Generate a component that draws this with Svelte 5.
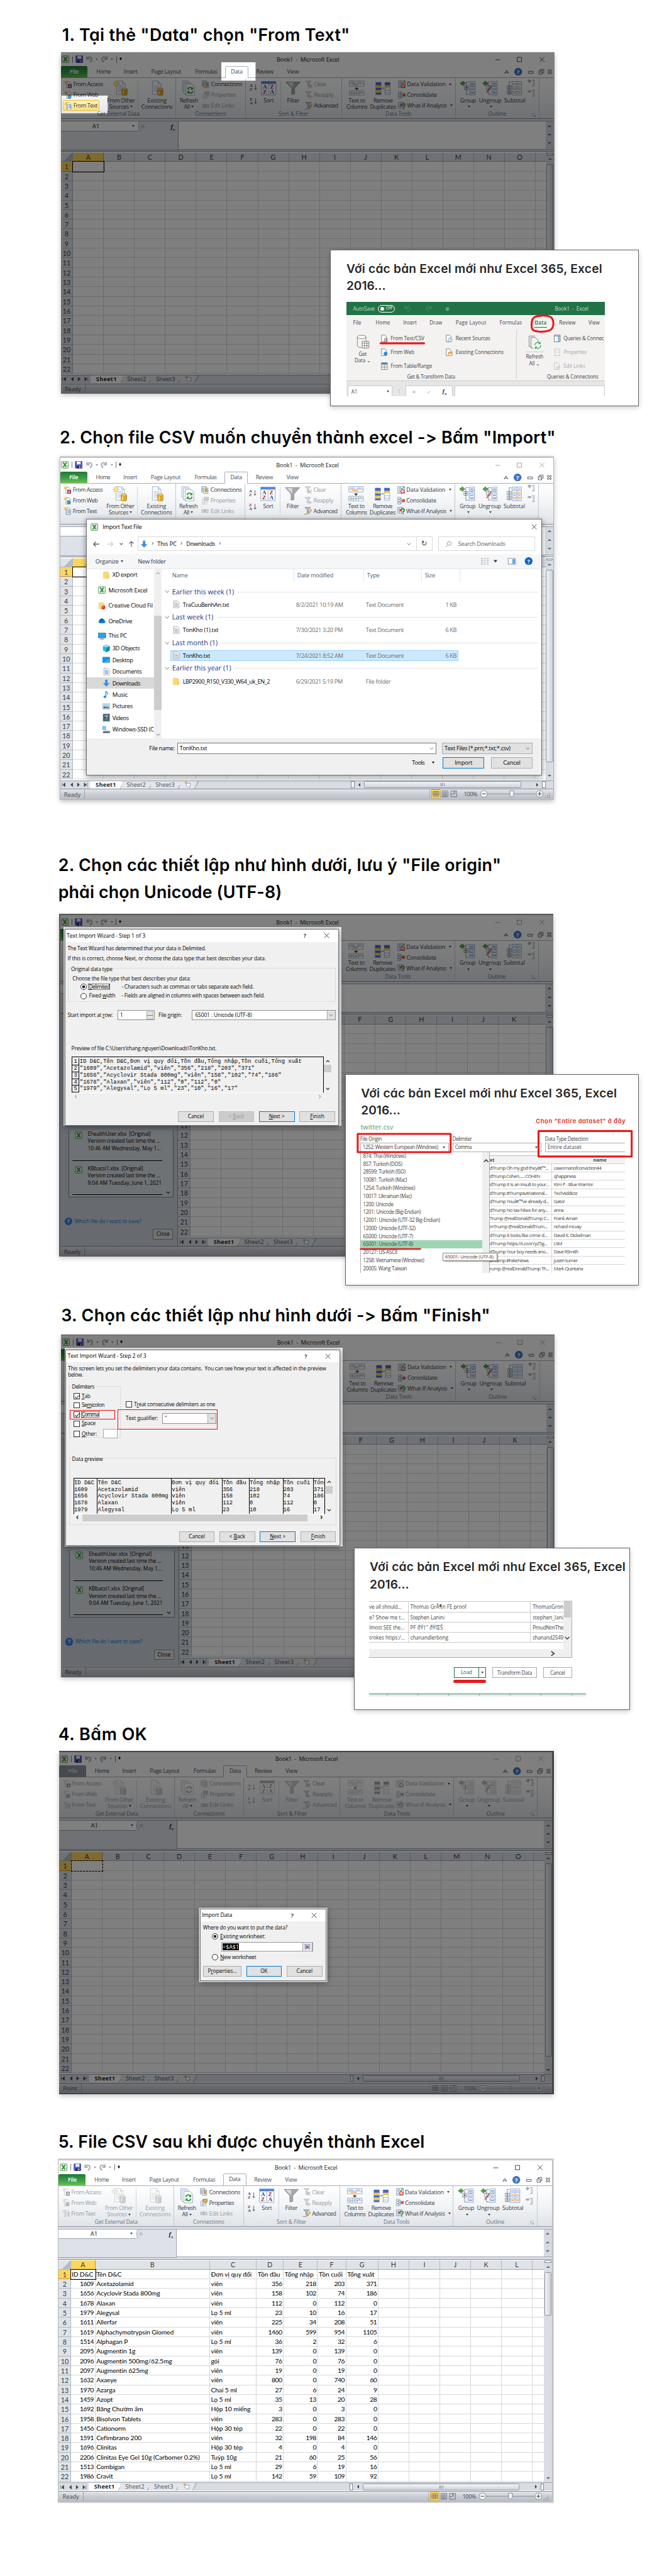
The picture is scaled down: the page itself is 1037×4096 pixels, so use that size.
<script>
  const letters = 'ABCDEFGHIJKLMNOPQ'.split('');
  const rowNumbers = Array.from({ length: 22 }, (_, i) => i + 1);
  const plainCols = Array(15).fill(64);
  const paneCols = Array(11).fill(64);
  const dataCols = [50, 238, 97, 56, 71, 59, 67, 64, 64, 64, 64, 64];

  // Widths of the ribbon captions, in pixels.
  const caption = {
    File: 18, Home: 30, Insert: 29, 'Page Layout': 62, Formulas: 46, Data: 24, Review: 36, View: 25,
    Group: 33, Ungroup: 47, Subtotal: 44, 'From Other': 58, Sources: 41, Existing: 40, Connections: 65,
    Refresh: 38, All: 12, Sort: 21, Filter: 26, 'Text to': 34, Columns: 44, Remove: 40, Duplicates: 54,
    'Get External Data': 89, 'Sort & Filter': 62, 'Data Tools': 54, Outline: 38
  };

  const stock = [
    ['ID D&C', 'Tên D&C', 'Đơn vị quy đổi', 'Tồn đầu', 'Tổng nhập', 'Tồn cuối', 'Tổng xuất'],
    [1609, 'Acetazolamid', 'viên', 356, 218, 203, 371],
    [1656, 'Acyclovir Stada 800mg', 'viên', 158, 102, 74, 186],
    [1678, 'Alaxan', 'viên', 112, 0, 112, 0],
    [1979, 'Alegysal', 'Lọ 5 ml', 23, 10, 16, 17],
    [1611, 'Allerfar', 'viên', 225, 34, 208, 51],
    [1619, 'Alphachymotrypsin Glomed', 'viên', 1460, 599, 954, 1105],
    [1514, 'Alphagan P', 'Lọ 5 ml', 36, 2, 32, 6],
    [2095, 'Augmentin 1g', 'viên', 139, 0, 139, 0],
    [2096, 'Augmentin 500mg/62.5mg', 'gói', 76, 0, 76, 0],
    [2097, 'Augmentin 625mg', 'viên', 19, 0, 19, 0],
    [1632, 'Axaeye', 'viên', 800, 0, 740, 60],
    [1970, 'Azarga', 'Chai 5 ml', 27, 6, 24, 9],
    [1459, 'Azopt', 'Lọ 5 ml', 35, 13, 20, 28],
    [1692, 'Băng Chườm ấm', 'Hộp 10 miếng', 3, 0, 3, 0],
    [1958, 'Bisolvon Tablets', 'viên', 283, 0, 283, 0],
    [1456, 'Cationorm', 'Hộp 30 tép', 22, 0, 22, 0],
    [1591, 'Cefimbrano 200', 'viên', 32, 198, 84, 146],
    [1696, 'Clinitas', 'Hộp 30 tép', 4, 0, 4, 0],
    [2206, 'Clinitas Eye Gel 10g (Carbomer 0.2%)', 'Tuýp 10g', 21, 60, 25, 56],
    [1513, 'Combigan', 'Lọ 5 ml', 29, 6, 19, 16],
    [1986, 'Cravit', 'Lọ 5 ml', 142, 59, 109, 92]
  ];

  const preview = [
    'ID D&C,Tên D&C,Đơn vị quy đổi,Tồn đầu,Tổng nhập,Tồn cuối,Tổng xuất',
    '"1609","Acetazolamid","viên","356","218","203","371"',
    '"1656","Acyclovir Stada 800mg","viên","158","102","74","186"',
    '"1678","Alaxan","viên","112","0","112","0"',
    '"1979","Alegysal","Lọ 5 ml","23","10","16","17"'
  ];
  const previewWidths = [49, 154, 105.5, 56, 70, 63, 24.5];

  const encodings = [
    ['874: Thai (Windows)', 89], ['857: Turkish (DOS)', 81], ['28599: Turkish (ISO)', 88], ['10081: Turkish (Mac)', 91],
    ['1254: Turkish (Windows)', 108], ['10017: Ukrainian (Mac)', 101], ['1200: Unicode', 63], ['1201: Unicode (Big-Endian)', 120],
    ['12001: Unicode (UTF-32 Big-Endian)', 160], ['12000: Unicode (UTF-32)', 109], ['65000: Unicode (UTF-7)', 104],
    ['65001: Unicode (UTF-8)', 104], ['20127: US-ASCII', 71], ['1258: Vietnamese (Windows)', 127], ['20005: Wang Taiwan', 91]
  ];
  const tweets = [
    ['dTrump Oh my god theyâ€™...', 122, 'cawomanofconviction44', 99],
    ['dTrump Cohen...... COHEN', 105, 'qhappiness', 46],
    ['dTrump It is an insult to your...', 124, 'Kim P - Blue Warrior', 82],
    ['dTrump #TrumpIsANational...', 120, 'TechAddictz', 49],
    ['dTrump Youâ€™ve already d...', 123, 'Gator', 23],
    ['dTrump No tax hikes for any...', 122, 'anna', 20],
    ['Trump @realDonaldTrump C...', 124, 'Frank Amari', 49],
    ['mTrump @realDonaldTrum...', 120, 'richard mcvay', 57],
    ['dTrump It looks like crime d...', 120, 'David E. Dickelman', 77],
    ['dTrump https://t.co/xYyZ5g...', 120, 'LSM', 17],
    ['dTrump Your boy needs ano...', 122, 'Dave RSmith', 51],
    ['dTrump #FakeNews', 81, 'justin turner', 50],
    ['rump @realDonaldTrump Th...', 124, 'Mark Quintana', 61]
  ];
  const loadRows = [
    ['ve all should...', 67, 'Thomas GrÃ¶n FE proof', 117, 'ThomasGron'],
    ['e? Show me t...', 74, 'Stephen Lanini', 71, 'stephen_lani'],
    ['lmost SEE the...', 73, 'PF ðŸ†˜ ðŸŒŠ', 68, 'ProudNonThe'],
    ['trokes https:/...', 74, 'chanandlerbong', 79, 'chanand2549']
  ];
  const roots = [
    ['folder', 'XD export', 1, 52], ['excel', 'Microsoft Excel', 0, 81], ['cloud', 'Creative Cloud Fil', 0, 92],
    ['onedrive', 'OneDrive', 0, 49], ['pc', 'This PC', 0, 38]
  ];
  const places = [
    ['cube', '3D Objects', 57], ['desktop', 'Desktop', 43], ['doc', 'Documents', 61], ['down', 'Downloads', 58],
    ['music', 'Music', 32], ['picture', 'Pictures', 42], ['video', 'Videos', 34], ['drive', 'Windows-SSD (C', 86]
  ];
  const fileGroups = [
    ['Earlier this week (1)', 129, 'file', 'TraCuuBenhAn.txt', 96, '8/2/2021 10:19 AM', 98, 'Text Document', 79, '1 KB'],
    ['Last week (1)', 86, 'file', 'TonKho (1).txt', 74, '7/30/2021 3:20 PM', 97, 'Text Document', 79, '6 KB'],
    ['Last month (1)', 95, 'file', 'TonKho.txt', 57, '7/24/2021 8:52 AM', 98, 'Text Document', 79, '6 KB'],
    ['Earlier this year (1)', 123, 'folder', 'LBP2900_R150_V330_W64_uk_EN_2', 181, '6/29/2021 5:19 PM', 97, 'File folder', 52, '']
  ];

  const ctx = document.createElement('canvas').getContext('2d');
  // Spreads letter spacing so that a label takes exactly the given width.
  function fit(node, width) {
    if (!width) return;
    const cs = getComputedStyle(node);
    ctx.font = `${cs.fontWeight} ${cs.fontSize} ${cs.fontFamily}`;
    ctx.letterSpacing = '0.01px';
    const text = node.textContent;
    node.style.letterSpacing = (width - ctx.measureText(text).width) / text.length + 'px';
  }
</script>

{#snippet ico(name, s = 16)}
  <svg class="ico" width={s} height={s} viewBox="0 0 {s > 20 ? 32 : 16} {s > 20 ? 32 : 16}">
    {#if name === 'excel'}
      <rect x="1" y="1" width="14" height="14" rx="1" fill="#f4fbf2" stroke="#2f7d32" />
      <path d="M3 3h3l2 3 2-3h3l-3.500 5 3.500 5h-3l-2-3-2 3H3l3.500-5z" fill="#2c8a35" />
      <path d="M11 8h3v5h-3z" fill="#bfe0bd" />
    {:else if name === 'save'}
      <path d="M1 1h14v14H2l-1-1z" fill="#5560c8" stroke="#2e3788" /><path d="M4 1h8v6H4z" fill="#eef0fb" /><path d="M4 10h8v5H4z" fill="#23286a" /><path d="M9 11h2v3H9z" fill="#fff" />
    {:else if name === 'undo'}
      <path d="M3 2v6h6M4 7c3-5 9-4 9 1 0 3-2 5-4 6" fill="none" stroke="#a9adb3" stroke-width="2.600" />
    {:else if name === 'redo'}
      <path d="M13 2v6H7M12 7C9 2 3 3 3 8c0 3 2 5 4 6" fill="none" stroke="#a9adb3" stroke-width="2.600" />
    {:else if name === 'access' || name === 'web' || name === 'text'}
      <path d="M5 2h6l3 3v10H5z" fill="#fff" stroke="#7f8fa6" /><path d="M7 7h5M7 9h5" stroke="#9db0cc" />
      <path d="M4 0v8M0 4h8M1 1l6 6M7 1L1 7" stroke="#efb42c" />
      {#if name === 'access'}<path d="M8 8h8v8H8z" fill="#a3264c" /><path d="M10 14.500l2-5 2 5M10.800 13h2.400" stroke="#fff" fill="none" />
      {:else if name === 'web'}<circle cx="11" cy="11.500" r="4" fill="#3b86c9" /><path d="M8.500 10.500l3-2 1 2-2 3.500z" fill="#5fb53e" />
      {:else}<path d="M7 6h7v10H7z" fill="#fff" stroke="#56739f" /><path d="M9 8.500h4M9 10.500h4M9 12.500h4" stroke="#56739f" />{/if}
    {:else if name === 'other' || name === 'existing'}
      <path d="M7 1h12l6 6v22H7z" fill="#f7faff" stroke="#93a3ba" /><path d="M19 1v6h6" fill="#dbe6f5" stroke="#93a3ba" />
      <path d="M10 11h12M10 14h12M10 17h9M10 20h9M10 23h9" stroke="#9db7dc" />
      <path d="M18 18v11c0 3 11 3 11 0V18z" fill="#e9a920" stroke="#a87414" /><ellipse cx="23.500" cy="18" rx="5.500" ry="2.200" fill="#fbdf8c" stroke="#a87414" /><path d="M21 21v9" stroke="#fbe08f" stroke-width="2" />
      {#if name === 'other'}<path d="M7 0v14M0 7h14M2 2l10 10M12 2L2 12" stroke="#f1b92f" stroke-width="1.500" /><circle cx="7" cy="7" r="2" fill="#fff5cf" />{/if}
    {:else if name === 'refresh'}
      <path d="M3 1h12l3 3v19H3z" fill="#f7faff" stroke="#93a3ba" /><path d="M6 4h12l4 4v20H6z" fill="#f7faff" stroke="#93a3ba" /><path d="M10 7h12l6 6v18H10z" fill="#fff" stroke="#8495ae" />
      <path d="M14 19c0-5 7-6 9-2M24 22c0 5-7 6-9 2" stroke="#2f9e3f" stroke-width="2.500" fill="none" /><path d="M25 13v6h-6zM13 28v-6h6z" fill="#2f9e3f" />
    {:else if name === 'conn'}
      <path d="M1 1h9v11H1z" fill="#eef4fc" stroke="#6a7f9d" /><path d="M5 4h9v11H5z" fill="#fff" stroke="#6a7f9d" /><path d="M8 6h4v6H8z" fill="#ecb33a" stroke="#9a6d18" /><path d="M3 4v6" stroke="#4b83cb" />
    {:else if name === 'prop'}
      <path d="M2 5h10v10H2z" fill="#fff" stroke="#8693a8" /><path d="M4 9h6M4 11h6M4 13h4" stroke="#6b88b5" /><path d="M6 1h9v6l-3 3-3-3H6z" fill="#dfae3f" stroke="#7f776a" />
    {:else if name === 'link'}
      <path d="M2 6h5v5H2zM9 6h5v5H9zM5 8.500h6" fill="none" stroke="#8c9099" stroke-width="2" />
    {:else if name === 'az' || name === 'za'}
      <text x="0" y="7.500" class="serif" fill={name === 'az' ? '#2d4a8f' : '#9c2a2a'}>{name === 'az' ? 'A' : 'Z'}</text>
      <text x="0" y="16" class="serif" fill={name === 'az' ? '#9c2a2a' : '#2d4a8f'}>{name === 'az' ? 'Z' : 'A'}</text>
      <path d="M12.500 3v10M10 11l2.500 3 2.500-3" stroke="#333" fill="none" />
    {:else if name === 'sort'}
      <path d="M1 2h30v28H1z" fill="#fff" stroke="#7b93ba" /><path d="M1 2h30v5H1z" fill="#4f86d9" /><path d="M16 7v23" stroke="#7b93ba" />
      <text x="4" y="17" class="serif big-letter" fill="#2d4a8f">A</text><text x="19" y="17" class="serif big-letter" fill="#9c2a2a">Z</text>
      <text x="4" y="28" class="serif big-letter" fill="#9c2a2a">Z</text><text x="19" y="28" class="serif big-letter" fill="#2d4a8f">A</text>
    {:else if name === 'filter'}
      <path d="M1 3h30L19 16v12l-6 1V16z" fill="#a6a8ac" stroke="#77797d" /><path d="M4 4h12l-1 11z" fill="#d9dadc" />
    {:else if name === 'clear' || name === 'reapply' || name === 'adv'}
      <path d="M1 1h12L9 6v7H6V6z" fill="#b9bbbf" stroke="#7e8085" />
      {#if name === 'clear'}<path d="M8 8l7 7M15 8l-7 7" stroke="#8b8e93" stroke-width="2" />
      {:else if name === 'reapply'}<path d="M8 9l6 2-4 4" stroke="#8b8e93" stroke-width="2" fill="none" />
      {:else}<path d="M15 5l-6 9" stroke="#e0a53a" stroke-width="3" /><path d="M0 15h8" stroke="#333" stroke-dasharray="1.500 1" />{/if}
    {:else if name === 't2c'}
      <path d="M1 1h30v11H1zM1 21h30v10H1z" fill="#fff" stroke="#7b93ba" /><path d="M1 6.500h30M1 26h30M11 21v10M21 21v10" stroke="#7b93ba" /><path d="M4 4h9M18 4h9M4 24h4M14 28h4" stroke="#4b83cb" /><path d="M7 9h13M4 28h5M14 24h4M23 24h5" stroke="#f09a37" stroke-width="1.500" /><path d="M16 13v5M12.500 16l3.500 3.500 3.500-3.500z" stroke="#444" fill="#444" />
    {:else if name === 'dup'}
      <path d="M1 4h11v25H1zM20 4h11v25H20z" fill="#fff" stroke="#7b93ba" /><path d="M1 4h11v6H1zM1 15h11v5H1zM1 25h11v4H1zM20 4h11v6H20z" fill="#4565c7" /><path d="M1 10h11v5H1zM1 20h11v5H1zM20 10h11v5H20z" fill="#f5c842" /><path d="M13 16h5M16 14l2 2-2 2" stroke="#4b63b5" fill="none" /><path d="M20 20h11M20 25h11" stroke="#7b93ba" />
    {:else if name === 'valid'}
      <path d="M1 1h14v14H1z" fill="#fff" stroke="#6a7f9d" /><path d="M3 4h5M3 8h4M3 12h5" stroke="#4b83cb" stroke-width="1.500" /><path d="M8 5l2 2 4-6" stroke="#2c8a35" stroke-width="1.500" fill="none" /><circle cx="11" cy="11" r="3.500" fill="#fff" stroke="#d2402f" stroke-width="1.500" /><path d="M9 13l4-4" stroke="#d2402f" />
    {:else if name === 'consol'}
      <path d="M1 1h5v4H1zM1 6h5v4H1zM1 11h5v4H1z" fill="#fff" stroke="#6a7f9d" /><path d="M6 3h3v10H6M6 8h4" stroke="#4b83cb" fill="none" /><path d="M10 5h6v6h-6z" fill="#e0532f" />
    {:else if name === 'whatif'}
      <path d="M1 1h11v12H1z" fill="#fff" stroke="#6a7f9d" /><path d="M1 5h11M1 9h11M5 1v12M9 1v12" stroke="#6a7f9d" /><path d="M5 5h4v4H5z" fill="#d64a3a" /><path d="M8 7c0-4 7-4 7 0 0 2-3 2-3 5M12 13.500v2" stroke="#2f8f3a" stroke-width="2" fill="none" />
    {:else if name === 'group' || name === 'ungroup'}
      <path d="M20 2h11v28H20z" fill="#f7faff" stroke="#7b93ba" /><path d="M20 9h11M20 16h11M20 23h11" stroke="#7b93ba" /><path d="M22 6h7M22 12h7M22 19h7M22 26h7" stroke="#4b83cb" stroke-width="1.500" />
      <path d="M18 3h-5v26h5M9 11h8v8H9z" fill="none" stroke="#5f6f88" />
      {#if name === 'group'}<path d="M11 15h4M13 13v4" stroke="#334" /><path d="M1 4h4V1l6 5-6 5V8H1z" fill="#56a845" stroke="#2e7a2a" />{:else}<path d="M9 25L19 11" stroke="#d8392d" stroke-width="2" /><path d="M11 4H7V1L1 6l6 5V8h4z" fill="#56a845" stroke="#2e7a2a" />{/if}
    {:else if name === 'subtotal'}
      <path d="M11 2h20v28H11z" fill="#f7faff" stroke="#7b93ba" /><path d="M11 9h20M11 16h20M11 23h20M21 2v28" stroke="#7b93ba" /><path d="M13 6h6M23 6h6M13 19h6M23 19h6" stroke="#4b83cb" /><path d="M13 13h6M23 13h6M13 26h6M23 26h6" stroke="#f09a37" stroke-width="1.500" /><path d="M9 3H5v27M1 11h8v7H1zM1 21h8v7H1zM3 14.500h4M5 12.500v4M3 24.500h4M5 22.500v4" stroke="#5f6f88" fill="none" />
    {:else if name === 'plus' || name === 'minus'}
      <path d={name === 'plus' ? 'M3 1h2v2h2v2H5v2H3V5H1V3h2z' : 'M1 3h6v3H1z'} fill="#a9abae" stroke="#85878a" stroke-width=".6" /><path d="M9 2h6M11 5h4M11 8h4M11 11h4M9 14h6" stroke="#777" />
    {:else if name === 'folder'}
      <path d="M2 2h9l2 2v11H2z" fill="#ffd86e" stroke="#e3b341" stroke-width=".6" /><path d="M11 9h3v6h-3z" fill="#f5c54d" />
    {:else if name === 'cloud'}
      <path d="M2 2h9l2 2v11H2z" fill="#ffd86e" stroke="#e3b341" stroke-width=".6" /><circle cx="11" cy="11.500" r="4" fill="#da1f26" /><path d="M9 12a1.500 1.500 0 1 1 2-1.500l2 2" stroke="#fff" fill="none" stroke-width=".9" />
    {:else if name === 'onedrive'}
      <path d="M3 13a3.500 3.500 0 0 1 0-6.500A5 5 0 0 1 12 6a3.700 3.700 0 0 1 1 7z" fill="#1482d8" /><path d="M3 6.500A5 5 0 0 1 12 6l-4 4z" fill="#0a5db0" />
    {:else if name === 'pc'}
      <path d="M0 2h16v10H0z" fill="#27a4ee" stroke="#5a6b78" /><path d="M4 14.500h8" stroke="#8b98a3" stroke-width="2" />
    {:else if name === 'cube'}
      <path d="M8 0l7 3v9l-7 4-7-4V3z" fill="#25bcd2" /><path d="M8 6l7-3v9l-7 4z" fill="#128fa6" /><path d="M8 0l7 3-7 3-7-3z" fill="#86e6f0" />
    {:else if name === 'desktop'}
      <path d="M0 2h16v12H0z" fill="#1790ea" /><path d="M3 13h12V5z" fill="#39adf8" />
    {:else if name === 'doc' || name === 'file'}
      <path d="M3 .5h8l3 3v12H3z" fill="#fff" stroke="#8d8d8d" /><path d="M5 4.500h5M5 6.500h7M5 8.500h7M5 10.500h7M5 12.500h7" stroke={name === 'doc' ? '#3d8fd1' : '#9a9a9a'} />
    {:else if name === 'down'}
      <path d="M5.500 1h5v7H15l-7 7.500L1 8h4.500z" fill="#3a8fe0" />
    {:else if name === 'music'}
      <path d="M7 13V1c1 3 5 3 4 8" stroke="#1a8ee6" stroke-width="1.600" fill="none" /><ellipse cx="5" cy="13" rx="3" ry="2.400" fill="#1a8ee6" />
    {:else if name === 'picture'}
      <path d="M.5 2.500h15v11H.5z" fill="#fff" stroke="#8e979e" /><path d="M2 4h12v8H2z" fill="#9ed2f5" /><path d="M2 8l4 1 8 1v2H2z" fill="#41707c" />
    {:else if name === 'video'}
      <path d="M1 0h14v16H1z" fill="#3c3f44" /><path d="M4 1h8v6H4z" fill="#5390dd" /><path d="M4 9h8v6H4z" fill="#377fb7" /><path d="M6 6l4-4v8z" fill="#e7a33a" /><path d="M2.500 1v14M13.500 1v14" stroke="#eee" stroke-dasharray="1.500 1.500" />
    {:else if name === 'drive'}
      <path d="M0 1h3v3H0zM4 1h3v3H4zM0 5h3v3H0zM4 5h3v3H4z" fill="#1ba1e8" /><path d="M3 9h10l3 3H1z" fill="#c9cdd0" /><path d="M1 12h15v3H1z" fill="#4b5054" /><path d="M13 13.500h2" stroke="#4fe067" />
    {:else if name === 'range'}
      <path d="M0 0h16v16H0z" fill="#eef2f8" /><path d="M1 3h14M1 7h14M1 11h14M4 1v14M12 1v14" stroke="#4a72b8" /><path d="M6 4l6 4-6 5z" fill="#df3b2f" />
    {:else if name === 'newsheet'}
      <path d="M5 5h9v9H9l-4-3z" fill="#fff" stroke="#5a7db0" /><path d="M4 0v7M.5 3.500h7M1.500 1l5 5M6.500 1l-5 5" stroke="#e8962e" />
    {/if}
  </svg>
{/snippet}

{#snippet small(icon, label, w, off = false, arrow = false)}
  <div class="small" class:off>{@render ico(icon)}<span use:fit={w}>{label}</span>{#if arrow}<i class="tri"></i>{/if}</div>
{/snippet}

{#snippet big(icon, l1, l2, w, off = false, arrow = false)}
  <div class="big" class:off style:width="{w}px">
    {@render ico(icon, 32)}
    <span use:fit={caption[l1]}>{l1}</span>
    <div class="second">{#if l2}<span use:fit={caption[l2]}>{l2}</span>{/if}{#if arrow}<i class="tri"></i>{/if}</div>
  </div>
{/snippet}

{#snippet ribbon(extOff, allOff)}
  <div class="ribbon">
    <div class="group g1">
      <div class="tools">
        <div class="stack w95">
          {@render small('access', 'From Access', 62, extOff)}
          {@render small('web', 'From Web', 52, extOff)}
          {@render small('text', 'From Text', 50, extOff)}
        </div>
        {@render big('other', 'From Other', 'Sources', 60, extOff, true)}
        <i class="vsep"></i>
        {@render big('existing', 'Existing', 'Connections', 68, extOff)}
      </div>
      <div class="glabel"><span use:fit={89}>Get External Data</span></div>
    </div>
    <div class="group g2">
      <div class="tools">
        {@render big('refresh', 'Refresh', 'All', 46, allOff, true)}
        <div class="stack">
          {@render small('conn', 'Connections', 65, allOff)}
          {@render small('prop', 'Properties', 52, !extOff || allOff)}
          {@render small('link', 'Edit Links', 49, true)}
        </div>
      </div>
      <div class="glabel"><span use:fit={65}>Connections</span></div>
    </div>
    <div class="group g3">
      <div class="tools">
        <div class="stack az" class:off={allOff}>{@render ico('az')}{@render ico('za')}</div>
        {@render big('sort', 'Sort', '', 38, allOff)}
        <i class="vsep"></i>
        {@render big('filter', 'Filter', '', 42, allOff)}
        <div class="stack">
          {@render small('clear', 'Clear', 26, true)}
          {@render small('reapply', 'Reapply', 41, true)}
          {@render small('adv', 'Advanced', 50, allOff)}
        </div>
      </div>
      <div class="glabel"><span use:fit={62}>Sort &amp; Filter</span></div>
    </div>
    <div class="group g4">
      <div class="tools">
        {@render big('t2c', 'Text to', 'Columns', 56, allOff)}
        {@render big('dup', 'Remove', 'Duplicates', 53, allOff)}
        <div class="stack">
          {@render small('valid', 'Data Validation', 81, allOff, true)}
          {@render small('consol', 'Consolidate', 62, allOff)}
          {@render small('whatif', 'What-If Analysis', 83, allOff, true)}
        </div>
      </div>
      <div class="glabel"><span use:fit={54}>Data Tools</span></div>
    </div>
    <div class="group g5">
      <div class="tools">
        {@render big('group', 'Group', '', 38, allOff, true)}
        {@render big('ungroup', 'Ungroup', '', 54, allOff, true)}
        {@render big('subtotal', 'Subtotal', '', 48, allOff)}
        <div class="stack levels">{@render ico('plus')}{@render ico('minus')}</div>
      </div>
      <div class="glabel"><span use:fit={38}>Outline</span><svg class="launch" width="8" height="8" viewBox="0 0 8 8"><path d="M0 7V0h7M3 3l4 4M7 4v3H4" fill="none" stroke="#8a9099" /></svg></div>
    </div>
  </div>
{/snippet}

{#snippet excel({ cols, rows = [], pane = false, extOff = false, allOff = false, idle = false, dashed = false, status = 'Ready', thumb = 400 })}
  <div class="titlebar">
    {@render ico('excel')}<i class="bar"></i>{@render ico('save')}{@render ico('undo')}<i class="tri grey"></i>{@render ico('redo')}<i class="tri grey"></i><i class="bar"></i><i class="tri over"></i>
    <span class="title" use:fit={130}>Book1&nbsp; -&nbsp; Microsoft Excel</span>
    <svg class="winctl" class:idle width="104" height="12" viewBox="0 0 104 12"><path d="M1 6.500h10M46.500 1.500h9v9h-9zM93 1l10 10M103 1L93 11" fill="none" stroke="#111" /></svg>
  </div>
  <div class="tabs">
    <b class="file" class:grey={allOff}><span use:fit={18}>File</span></b>
    {#each ['Home', 'Insert', 'Page Layout', 'Formulas', 'Data', 'Review', 'View'] as tab, i}
      <div class="tab t{i}"><span use:fit={caption[tab]}>{tab}</span></div>
    {/each}
    <svg class="tabctl" width="100" height="16" viewBox="0 0 100 16">
      <path d="M1 11l4-6 4 6-4-2zM50 7h10v4H50zM72 6h7v7h-7zM75 6V3h7v7h-3M74 9h3M91 4l8 8M99 4l-8 8" fill="none" stroke="#4a525c" stroke-width="1.200" />
      <path d="M91 4l8 8M99 4l-8 8" stroke="#4a525c" stroke-width="3.500" /><path d="M91 4l8 8M99 4l-8 8" stroke="#fff" stroke-width="1.400" />
      <circle cx="29" cy="8" r="7.500" fill="#3d77c9" stroke="#2b5699" /><text x="29" y="12.500" class="q">?</text>
    </svg>
  </div>
  {@render ribbon(extOff, allOff)}
  <div class="formula">
    <div class="namebox">
      <div class="cellref"><span>A1</span><i class="tri"></i></div><div class="fx"><i class="knob"></i><em>f<sub>x</sub></em></div>
    </div>
    <div class="fbar"></div>
    <div class="fscroll"><i class="up box"></i><i class="up"></i><i class="dn"></i></div>
  </div>
  <div class="sheetarea">
    {#if pane}
      <div class="pane">
        <div class="list">
          <div class="entry">{@render ico('excel')}<div><span use:fit={131}>EhealthUser.xlsx&nbsp; [Original]</span><span use:fit={151}>Version created last time the ...</span><span use:fit={152}>10:46 AM Wednesday, May 1...</span></div></div>
          <div class="entry">{@render ico('excel')}<div><span use:fit={115}>KBbacsi1.xlsx&nbsp; [Original]</span><span use:fit={151}>Version created last time the ...</span><span use:fit={154}>9:04 AM Tuesday, June 1, 2021</span></div></div>
          <svg class="chev" width="9" height="6" viewBox="0 0 9 6"><path d="M1 1l3.500 3.500L8 1" /></svg>
        </div>
        <div class="which"><i class="help">?</i><span use:fit={139}>Which file do I want to save?</span></div>
        <div class="closebtn">Close</div>
      </div>
    {/if}
    <div class="sheet">
      <div class="main">
        <div class="grid">
          <div class="row heads"><span class="rh corner"></span>{#each cols as w, i}<span class="ch" class:on={i === 0 && !pane} style:width="{w}px">{letters[i]}</span>{/each}<span class="ch last"></span></div>
          {#each rowNumbers as n}
            <div class="row"><span class="rh" class:on={n === 1 && !pane}>{n}</span>
              {#each cols as w, i}
                {@const v = rows[n - 1]?.[i]}
                <span class="cell" class:num={typeof v === 'number'} class:sel={n === 1 && i === 0 && !pane} class:dashed style:width="{w}px">{v ?? ''}</span>
              {/each}<span class="cell last"></span>
            </div>
          {/each}
        </div>
        <div class="vscroll"><i class="split"></i><i class="up"></i><i class="vthumb" style:height="{thumb}px"></i><i class="dn"></i></div>
      </div>
      <div class="sheettabs">
        <svg class="nav" width="56" height="10" viewBox="0 0 56 10"><path d="M1 1v8M7 1L3 5l4 4zM23 1l-4 4 4 4zM33 1l4 4-4 4zM47 1l4 4-4 4zM53 1v8" fill="#333c48" stroke="#333c48" stroke-width=".8" /></svg>
        <div class="st on"><span use:fit={43}>Sheet1</span></div><div class="st"><span use:fit={40}>Sheet2</span></div><div class="st"><span use:fit={40}>Sheet3</span></div><div class="st new">{@render ico('newsheet', 14)}</div>
        {#if !pane}<div class="hscroll"><i class="grip"></i><i class="lt"></i><i class="hthumb"><i></i></i><i class="rt"></i><i class="grip"></i></div>{/if}
      </div>
    </div>
  </div>
  <div class="status">
    <span>{status}</span>
    <div class="zoomer" class:dull={allOff}>
      <svg width="252" height="20" viewBox="0 0 252 20">
        <path d="M.5 0v20" stroke="#9aa1aa" />
        {#if !allOff}<rect x="4.500" y=".5" width="18" height="18" rx="2" fill="#fdd96b" stroke="#c08a24" />{/if}
        <path d="M7.500 4.500h12v10h-12zM7.500 8h12M7.500 11h12M11.500 4.500v10M15.500 4.500v10M26.500 3.500h12v12h-12zM29.500 6.500h6v7h-6zM31 9h3M31 11h3M44.500 3.500h12v12h-12zM44.500 10h6V4M53 4v6" fill="none" stroke="#555c66" />
        <text x="71" y="14" class="pct">100%</text>
        <path d="M119 9.500h102" stroke="#7b8390" /><circle cx="113" cy="9.500" r="7" fill="#f4f5f7" stroke="#6d747f" /><circle cx="229" cy="9.500" r="7" fill="#f4f5f7" stroke="#6d747f" /><path d="M109 9.500h8M225 9.500h8M229 5.500v8" stroke="#444" stroke-width="1.500" />
        {#if !allOff}<path d="M167 3h8v9l-4 4-4-4z" fill="#f4f5f7" stroke="#6d747f" />{:else}<path d="M171 5v9" stroke="#7b8390" />{/if}
        <path d="M249 8v2M245 12v2M249 12v2M241 16v2M245 16v2M249 16v2" stroke="#8a919b" stroke-width="2" />
      </svg>
    </div>
  </div>
{/snippet}

{#snippet note()}
  <p class="lead"><span use:fit={531}>Với các bản Excel mới như Excel 365, Excel</span><br /><span use:fit={82}>2016...</span></p>
{/snippet}

{#snippet dlgtitle(title, w)}
  <div class="dtitle"><span use:fit={w}>{title}</span><b>?</b><svg width="12" height="12" viewBox="0 0 12 12"><path d="M1 1l10 10M11 1L1 11" stroke="#111" fill="none" /></svg></div>
{/snippet}

{#snippet wizbuttons(backOff)}
  <div class="wbtns"><span>Cancel</span><span class:disabled={backOff}>&lt; <u>B</u>ack</span><span class="primary"><u>N</u>ext &gt;</span><span><u>F</u>inish</span></div>
{/snippet}

<main>
  <section class="s1">
    <h2><span use:fit={594}>1. Tại thẻ "Data" chọn "From Text"</span></h2>
    <div class="shot">
      <div class="win">
        {@render excel({ cols: plainCols })}
        <svg class="dim" width="1025" height="709" viewBox="0 0 1025 709"><path fill-rule="evenodd" d="M0 0h1025v709H0zM333 21v38h71V21zM1 90v37h96V90z" fill="#000" fill-opacity=".5" /></svg>
      </div>
      <aside class="callout c1">
        {@render note()}
        <div class="x365">
          <div class="green"><span use:fit={45}>AutoSave</span><i class="toggle"><b></b>Off</i>
            <svg width="100" height="16" viewBox="0 0 100 16"><path d="M2 2v5h6M3 6c4-5 10-2 9 2-1 3-4 5-6 6M56 2v5h-6M55 6c-4-5-10-2-9 2 1 3 4 5 6 6" stroke="#5b9a78" fill="none" /><path d="M86 6h7M86.500 9h6l-3 3z" stroke="#cfe3d8" fill="none" /></svg>
            <span class="book" use:fit={70}>Book1&nbsp; -&nbsp; Excel</span></div>
          <div class="xtabs"><span>File</span><span>Home</span><span>Insert</span><span>Draw</span><span use:fit={64}>Page Layout</span><span use:fit={47}>Formulas</span><span class="cur" use:fit={25}>Data</span><span>Review</span><span>View</span></div>
          <div class="xbody">
            <div class="xbig get"><svg width="28" height="30" viewBox="0 0 28 30"><ellipse cx="12" cy="5" rx="9" ry="3.500" fill="#fff" stroke="#666" /><path d="M3 5v18c0 3 6 4 9 4M21 5v8" stroke="#666" fill="none" /><path d="M13 14h14v14H13zM13 18h14M13 23h14M18 14v14M23 14v14" fill="#fff" stroke="#666" /></svg><span>Get</span><span>Data ⌄</span></div>
            <div class="xcol a">
              <span><svg width="14" height="16" viewBox="0 0 14 16"><path d="M1 1h7l3 4v10H1zM7 8h6v7H7z" fill="#fff" stroke="#666" /><path d="M8.500 10.500h3M8.500 12.500h3" stroke="#666" /></svg><i use:fit={70}>From Text/CSV</i></span>
              <span><svg width="14" height="16" viewBox="0 0 14 16"><path d="M1 1h7l3 4v10H1z" fill="#fff" stroke="#666" /><circle cx="9.500" cy="11" r="4" fill="#2f8ed1" /></svg><i use:fit={49}>From Web</i></span>
              <span><svg width="14" height="16" viewBox="0 0 14 16"><path d="M1 1h12v14H1zM1 5h12M1 10h12M7 5v10" fill="#fff" stroke="#666" /><path d="M1 1h12v3H1z" fill="#2f8ed1" /></svg><i use:fit={86}>From Table/Range</i></span>
            </div>
            <div class="xcol b">
              <span><svg width="14" height="16" viewBox="0 0 14 16"><path d="M1 1h7l3 4v10H1z" fill="#fff" stroke="#666" /><circle cx="9" cy="11" r="4" fill="#fff" stroke="#2f8ed1" /><path d="M9 8.500V11h2" stroke="#2f8ed1" fill="none" /></svg><i use:fit={72}>Recent Sources</i></span>
              <span><svg width="14" height="16" viewBox="0 0 14 16"><path d="M1 1h7l3 4v10H1z" fill="#fff" stroke="#666" /><path d="M6 8h7v7H6zM6 10h7" fill="#fff" stroke="#e58a3c" stroke-width="1.500" /></svg><i use:fit={100}>Existing Connections</i></span>
            </div>
            <i class="xsep"></i>
            <div class="xbig ref"><svg width="28" height="30" viewBox="0 0 28 30"><path d="M2 3h12M2 3v22h4M6 6h9l6 6v4M6 6v22h5" fill="none" stroke="#666" /><path d="M14 22a6 6 0 0 1 11-3M26 22a6 6 0 0 1-11 4M25 15v4h-4M15 30v-4h4" fill="none" stroke="#35a853" stroke-width="1.500" /></svg><span class="top">Refresh</span><span>All ⌄</span></div>
            <div class="xcol c">
              <span><svg width="14" height="16" viewBox="0 0 14 16"><path d="M1 1h12v14H1zM1 3h12" fill="#fff" stroke="#555" /><path d="M8 4h4v10H8z" fill="#7fc1ec" /></svg><i use:fit={84}>Queries &amp; Connec</i></span>
              <span class="faint"><svg width="14" height="16" viewBox="0 0 14 16"><path d="M2 1h10v14H2zM4 5h2M8 5h2M4 9h2M8 9h2" fill="none" stroke="#888" /></svg><i use:fit={48}>Properties</i></span>
              <span class="faint"><svg width="14" height="16" viewBox="0 0 14 16"><path d="M1 1h7l3 4v10H1zM6 9h3v4H6zM9 11h4" fill="none" stroke="#888" /></svg><i use:fit={45}>Edit Links</i></span>
            </div>
          </div>
          <div class="xlabels"><span use:fit={100}>Get &amp; Transform Data</span><span use:fit={107}>Queries &amp; Connections</span></div>
          <div class="xbar"><span class="ref">A1<i class="tri"></i></span><i class="dots">⋮</i><span class="fxs"><i>✕</i><i>✓</i><em>f<sub>x</sub></em></span><span class="rest"></span></div>
          <svg class="ink" width="537" height="195" viewBox="0 0 537 195"><path d="M389 33c6-6 30-6 37 0 6 8 5 22-4 26-8 4-27 4-34 0-5-4-4-19-1-24 4-6 13-6 18-6" stroke="#e8191c" stroke-width="4" fill="none" /><path d="M71 86h90" stroke="#e8191c" stroke-width="4.500" stroke-linecap="round" /></svg>
        </div>
      </aside>
    </div>
  </section>

  <section class="s2">
    <h2><span use:fit={1028}>2. Chọn file CSV muốn chuyển thành excel -&gt; Bấm "Import"</span></h2>
    <div class="shot">
      <div class="win">
        {@render excel({ cols: plainCols, idle: true })}
        <div class="dlg import">
          <div class="ititle">{@render ico('excel')}<span use:fit={81}>Import Text File</span><svg width="12" height="12" viewBox="0 0 12 12"><path d="M1 1l10 10M11 1L1 11" stroke="#111" /></svg></div>
          <div class="inav">
            <svg width="96" height="16" viewBox="0 0 96 16"><path d="M14 8H3M7 3L2.500 8 7 13" fill="none" stroke="#444" stroke-width="1.500" /><path d="M31 8h11M38 3l4.500 5L38 13" fill="none" stroke="#c8c8c8" stroke-width="1.500" /><path d="M57 6l3 3 3-3M81 14V3M76.500 7L81 2.500 85.500 7" fill="none" stroke="#555" stroke-width="1.400" /></svg>
            <div class="path">{@render ico('down')}<i>›</i><span use:fit={40}>This PC</span><i>›</i><span use:fit={60}>Downloads</span><i>›</i><svg class="drop" width="9" height="6" viewBox="0 0 9 6"><path d="M1 1l3.500 3.500L8 1" /></svg><b>↻</b></div>
            <div class="search"><svg width="14" height="14" viewBox="0 0 14 14"><circle cx="8.500" cy="5.500" r="4" fill="none" stroke="#777" /><path d="M5.500 8.500L1 13" stroke="#777" /></svg><span use:fit={98}>Search Downloads</span></div>
          </div>
          <div class="itool"><span use:fit={48}>Organize</span><i class="tri"></i><span class="nf" use:fit={58}>New folder</span>
            <svg width="110" height="16" viewBox="0 0 110 16"><path d="M0 2.500h5M7 2.500h3M12 2.500h4M0 6.500h5M7 6.500h3M12 6.500h4M0 10.500h5M7 10.500h3M12 10.500h4M0 14.500h5M7 14.500h3M12 14.500h4" stroke="#888" /><path d="M26 6h8l-4 5z" fill="#223a66" /><path d="M56.500 2.500h15v12h-15z" fill="#fff" stroke="#777" /><path d="M65 4h6v10h-6z" fill="#5fb0ec" /><circle cx="99" cy="8" r="8" fill="#0a63c2" /><text x="99" y="12.500" class="q">?</text></svg></div>
          <div class="ibody">
            <div class="tree">
              {#each roots as [icon, label, deep, w]}<div class="node r" class:deep={deep === 1}>{@render ico(icon)}<span use:fit={w}>{label}</span></div>{/each}
              {#each places as [icon, label, w]}<div class="node deep" class:cur={label === 'Downloads'}>{@render ico(icon)}<span use:fit={w}>{label}</span></div>{/each}
            </div>
            <div class="tscroll"><svg width="9" height="6" viewBox="0 0 9 6"><path d="M1 5l3.500-3.500L8 5" /></svg><i></i><svg width="9" height="6" viewBox="0 0 9 6"><path d="M1 1l3.500 3.500L8 1" /></svg></div>
            <div class="files">
              <div class="fhead"><span class="n">Name</span><span class="d"><i use:fit={75}>Date modified</i></span><span class="t">Type</span><span class="s">Size</span></div>
              {#each fileGroups as [g, gw, icon, name, nw, date, dw, type, tw, size], i}
                <div class="fgroup"><svg width="10" height="7" viewBox="0 0 10 7"><path d="M1 1l4 4.500L9 1" fill="none" stroke="#555" /></svg><span use:fit={gw}>{g}</span></div>
                <div class="frow" class:cur={i === 2}>{@render ico(icon)}<span class="n"><i use:fit={nw}>{name}</i></span><span class="d"><i use:fit={dw}>{date}</i></span><span class="t"><i use:fit={tw}>{type}</i></span><span class="s" use:fit={size ? 23 : 0}>{size}</span></div>
              {/each}
            </div>
          </div>
          <div class="ifoot">
            <div class="l1"><span use:fit={53}>File name:</span><div class="inp"><i use:fit={57}>TonKho.txt</i><svg width="9" height="6" viewBox="0 0 9 6"><path d="M1 1l3.500 3.500L8 1" /></svg></div><div class="inp grey"><i use:fit={137}>Text Files (*.prn;*.txt;*.csv)</i><svg width="9" height="6" viewBox="0 0 9 6"><path d="M1 1l3.500 3.500L8 1" /></svg></div></div>
            <div class="l2"><span use:fit={26}>Tools</span><i class="tri"></i><b class="primary">Import</b><b>Cancel</b></div>
          </div>
        </div>
      </div>
    </div>
  </section>

  <section class="s3">
    <h2><span use:fit={919}>2. Chọn các thiết lập như hình dưới, lưu ý "File origin"</span><br /><span use:fit={463}>phải chọn Unicode (UTF-8)</span></h2>
    <div class="shot">
      <div class="win covered">
        {@render excel({ cols: paneCols, pane: true, idle: true, thumb: 410 })}
        <div class="shade"></div>
        <div class="halo h1"></div>
        <div class="dlg wiz w1">
          {@render dlgtitle('Text Import Wizard - Step 1 of 3', 164)}
          <p class="p1"><span use:fit={288}>The Text Wizard has determined that your data is Delimited.</span></p>
          <p class="p2"><span use:fit={413}>If this is correct, choose Next, or choose the data type that best describes your data.</span></p>
          <div class="fs type"><span class="legend" use:fit={86}>Original data type</span>
            <p><span use:fit={246}>Choose the file type that best describes your data:</span></p>
            <div class="opt"><i class="radio on"></i><span class="focus" use:fit={43}><u>D</u>elimited</span><span class="desc" use:fit={275}>- Characters such as commas or tabs separate each field.</span></div>
            <div class="opt"><i class="radio"></i><span use:fit={55}>Fixed <u>w</u>idth</span><span class="desc" use:fit={298}>- Fields are aligned in columns with spaces between each field.</span></div>
          </div>
          <div class="origin"><span use:fit={94}>Start import at <u>r</u>ow:</span><div class="field spin">1<i></i></div><span use:fit={49}>File <u>o</u>rigin:</span><div class="field sel"><b use:fit={118}>65001 : Unicode (UTF-8)</b><i><svg width="9" height="6" viewBox="0 0 9 6"><path d="M1 1l3.500 3.500L8 1" /></svg></i></div></div>
          <p class="prev"><span use:fit={302}>Preview of file C:\Users\thang.nguyen\Downloads\TonKho.txt.</span></p>
          <div class="pwrap">
            <div class="pbox lines">{#each preview as line, i}<div class="ln"><b>{i + 1}</b><span use:fit={line.length * 7}>{line}</span></div>{/each}</div>
            <div class="pscroll"><svg width="9" height="6" viewBox="0 0 9 6"><path d="M1 5l3.500-3.500L8 5" /></svg><i></i><svg width="9" height="6" viewBox="0 0 9 6"><path d="M1 1l3.500 3.500L8 1" /></svg></div>
          </div>
          <div class="phs faint"><span>‹</span><span>›</span></div>
          {@render wizbuttons(true)}
        </div>
      </div>
      <aside class="callout c2">
        {@render note()}
        <div class="csv"><span use:fit={68}>twitter.csv</span><b use:fit={185}>Chọn "Entire dataset" ở đây</b></div>
        <div class="opts">
          <div><p class="lab"><span use:fit={45}>File Origin</span></p><span class="dd"><i use:fit={157}>1252: Western European (Windows)</i><i class="tri"></i></span></div>
          <div><p class="lab"><span use:fit={40}>Delimiter</span></p><span class="dd"><i use:fit={34}>Comma</i><i class="tri"></i></span></div>
          <div class="open"><p class="lab"><span use:fit={90}>Data Type Detection</span></p><span class="dd"><i use:fit={71}>Entire dataset</i></span></div>
        </div>
        <div class="lists">
          <div class="enc">{#each encodings as [e, w], i}<div class:cur={i === 11}><span use:fit={w}>{e}</span></div>{/each}</div>
          <div class="escroll"><svg width="11" height="7" viewBox="0 0 11 7"><path d="M1 6l4.500-4.500L10 6" stroke-width="2" /></svg></div>
          <div class="tw"><div class="th"><b>xt</b><b class="mid">name</b></div>{#each tweets as [a, aw, b, bw]}<div class="tr"><div><span use:fit={aw}>{a}</span></div><div><span use:fit={bw}>{b}</span></div></div>{/each}</div>
        </div>
        <div class="tip"><span use:fit={101}>65001: Unicode (UTF-8)</span></div>
        <svg class="ink2" width="610" height="438" viewBox="0 0 610 438"><path d="M26 124h193v38H26zM401.500 118H595v53H401.500z" stroke="#e8191c" stroke-width="4" fill="none" stroke-linejoin="round" /><path d="M32 363h124" stroke="#e8191c" stroke-width="3.500" stroke-linecap="round" /></svg>
      </aside>
    </div>
  </section>

  <section class="s4">
    <h2><span use:fit={888}>3. Chọn các thiết lập như hình dưới -&gt; Bấm "Finish"</span></h2>
    <div class="shot">
      <div class="win covered">
        {@render excel({ cols: paneCols, pane: true, idle: true, thumb: 410 })}
        <div class="shade"></div>
        <div class="halo h2x"></div>
        <div class="dlg wiz w2">
          {@render dlgtitle('Text Import Wizard - Step 2 of 3', 164)}
          <p class="p3"><span use:fit={537}>This screen lets you set the delimiters your data contains.&nbsp; You can see how your text is affected in the preview</span><br /><span use:fit={31}>below.</span></p>
          <div class="delims">
            <div class="fs dl"><span class="legend" use:fit={46}>Delimiters</span>
              <div class="ck"><i class="on"></i><span use:fit={18}><u>T</u>ab</span></div>
              <div class="ck"><i></i><span use:fit={47}>Se<u>m</u>icolon</span></div>
              <div class="ck"><i class="on"></i><span class="focus" use:fit={35}><u>C</u>omma</span></div>
              <div class="ck"><i></i><span use:fit={29}><u>S</u>pace</span></div>
              <div class="ck other"><i></i><span use:fit={32}><u>O</u>ther:</span><b></b></div>
            </div>
            <div class="qual">
              <div class="ck"><i></i><span use:fit={169}>T<u>r</u>eat consecutive delimiters as one</span></div>
              <div class="tq"><span use:fit={67}>Text <u>q</u>ualifier:</span><div class="field sel">"<i><svg width="9" height="6" viewBox="0 0 9 6"><path d="M1 1l3.500 3.500L8 1" /></svg></i></div></div>
            </div>
          </div>
          <div class="fs dp"><span class="legend" use:fit={64}>Data <u>p</u>review</span>
            <div class="pwrap">
              <div class="pbox table">{#each previewWidths as w, c}<div class="pc" style:width="{w}px">{#each stock.slice(0, 5) as r}<span use:fit={String(r[c]).length * 7}>{r[c]}</span>{/each}</div>{/each}</div>
              <div class="pscroll"><svg width="9" height="6" viewBox="0 0 9 6"><path d="M1 5l3.500-3.500L8 5" /></svg><i></i><svg width="9" height="6" viewBox="0 0 9 6"><path d="M1 1l3.500 3.500L8 1" /></svg></div>
            </div>
            <div class="phs"><span>‹</span><i></i><span>›</span></div>
          </div>
          {@render wizbuttons(false)}
          <i class="mark m1"></i><i class="mark m2"></i>
        </div>
      </div>
      <aside class="callout c3">
        {@render note()}
        <div class="ltable">
          <div class="lrows">{#each loadRows as [a, aw, b, bw, c]}<div class="lr"><div><span use:fit={aw}>{a}</span></div><div><span use:fit={bw}>{b}</span></div><div><span use:fit={64}>{c}</span></div></div>{/each}</div>
          <div class="lv"><i></i><svg width="11" height="7" viewBox="0 0 11 7"><path d="M1 1l4.500 4.500L10 1" stroke-width="2" /></svg></div>
        </div>
        <div class="lh"><svg width="9" height="11" viewBox="0 0 9 11"><path d="M1 1l6 4.500L1 10" stroke-width="2.200" /></svg></div>
        <div class="lbtns"><div class="load"><i>Load</i><b><i class="tri"></i></b></div><div class="tf"><span use:fit={72}>Transform Data</span></div><div class="cn"><span use:fit={31}>Cancel</span></div></div>
        <i class="under"></i>
        <div class="ticks">{#each [38, 64, 64, 64, 64, 64, 64] as w}<i style:width="{w}px"></i>{/each}</div>
      </aside>
    </div>
  </section>

  <section class="s5">
    <h2><span use:fit={184}>4. Bấm OK</span></h2>
    <div class="shot">
      <div class="win">
        {@render excel({ cols: plainCols, extOff: true, allOff: true, idle: true, dashed: true, status: 'Point' })}
        <div class="shade"></div>
        <div class="dlg impdata">
          {@render dlgtitle('Import Data', 63)}
          <p><span use:fit={176}>Where do you want to put the data?</span></p>
          <div class="opt"><i class="radio on"></i><span use:fit={94}><u>E</u>xisting worksheet:</span></div>
          <div class="rng"><b use:fit={34}>=$A$1</b><i>{@render ico('range', 15)}</i></div>
          <div class="opt nw"><i class="radio"></i><span use:fit={75}><u>N</u>ew worksheet</span></div>
          <div class="ibtns"><span>P<u>r</u>operties...</span><span class="primary">OK</span><span>Cancel</span></div>
        </div>
      </div>
    </div>
  </section>

  <section class="s6">
    <h2><span use:fit={759}>5. File CSV sau khi được chuyển thành Excel</span></h2>
    <div class="shot">
      <div class="win">
        {@render excel({ cols: dataCols, rows: stock, extOff: true, thumb: 90 })}
      </div>
    </div>
  </section>
</main>

<style>
  :global(body) { background: #fff; }
  main { zoom: 0.7659; width: 1354px; height: 5348px; overflow: hidden; background: #fff; color: #222; font: 12px/1 'Open Sans', 'Noto Sans', sans-serif; }
  main :global(*) { box-sizing: border-box; }
  i { font-style: normal; }
  p { margin: 0; }
  span, b { white-space: nowrap; }
  h2 { margin: 0; font: 600 35px/56px Inter, 'Open Sans', sans-serif; font-feature-settings: 'cv11'; color: #000; }
  svg { flex: none; display: block; }

  .s1 { height: 860px; padding: 44px 0 0 126px; }
  .s1 h2 { padding-left: 3px; margin-bottom: 9px; }
  .s2 { height: 890px; padding: 20.500px 0 0 124px; }
  .s2 h2 { margin-bottom: 10.500px; }
  .s3 { height: 940px; padding: 18px 0 0 123px; }
  .s3 h2 { margin: 0 0 17.500px -2px; }
  .s4 { height: 870px; padding: 12.500px 0 0 126px; }
  .s4 h2 { margin-bottom: 12.500px; padding-left: 1px; }
  .s5 { height: 850px; padding: 12px 0 0 123px; }
  .s5 h2 { margin: 0 0 7px -2px; }
  .s6 { height: 938px; padding: 9px 0 0 120px; }
  .s6 h2 { margin-bottom: 6px; padding-left: 1px; }

  .shot { position: relative; width: 1026px; height: 709px; box-shadow: 0 4px 10px rgba(0, 0, 0, .25); }
  .s2 .shot { height: 714px; padding: 4px 0 0 1px; background: #cfcfcf; }
  .s3 .shot { height: 711px; padding: 2.500px 0 0 2px; background: #555; }
  .s4 .shot { height: 711px; padding: 1.500px 0 0 1px; background: #555; }
  .s5 .shot { height: 713px; padding-top: 2px; background: #444; width: 1027px; }
  .s6 .shot { height: 716px; width: 1030px; padding: 4px 0 0 2px; background: #d2d2d2; box-shadow: none; }
  .win { position: relative; width: 1024px; height: 708px; background: #fff; }
  .s2 .win, .s6 .win { box-shadow: 0 0 0 1px #a9adb3; }

  .titlebar { height: 29px; display: flex; align-items: center; padding: 0 18px 0 2px; gap: 5px; }
  .titlebar .bar { width: 1px; height: 13px; background: #777; margin: 0 1px; }
  .titlebar .title { margin: 0 auto 0 316px; color: #222; }
  .winctl.idle { opacity: .5; }
  .tri { display: inline-block; flex: none; border: 3.500px solid transparent; border-top: 4px solid #444; border-bottom: 0; margin-left: 4px; }
  .titlebar .tri { margin: 0; }
  .tri.grey { border-top-color: #999; }
  .tri.over { border-top-color: #111; box-shadow: 0 -3px 0 -1px #111; }
  .tabs { height: 24px; display: flex; align-items: center; border-bottom: 1px solid #a9afb8; color: #444b55; font-size: 11.500px; }
  .tab { flex: none; }
  .file { width: 56px; height: 24px; line-height: 24px; text-align: center; color: #fff; font-weight: 600; background: linear-gradient(#1f7a33, #3ea04a 60%, #6bc34c); border-radius: 3px 3px 0 0; flex: none; }
  .file.grey { background: #8d949e; color: #cfe0cc; }
  .t0 { width: 57px; margin-left: 18px; }
  .t1 { width: 57px; }
  .t2 { width: 91px; }
  .t3 { width: 62px; }
  .t4 { width: 49px; height: 25px; line-height: 23px; text-align: center; background: #fff; border: 1px solid #a9afb8; border-bottom: 0; border-radius: 3px 3px 0 0; margin-right: 16px; }
  .t5 { width: 64px; }
  .tabctl { margin-left: auto; margin-right: 3px; }
  .q { font: 700 12px 'Open Sans', sans-serif; fill: #fff; text-anchor: middle; }
  .serif { font: 700 9px 'Liberation Serif', serif; }
  .big-letter { font-size: 12px; }

  .ribbon { display: flex; height: 85px; background: linear-gradient(#fff, #f3f5f7 45%, #dfe3e8); border-bottom: 1px solid #8a9099; }
  .group { display: flex; flex-direction: column; border-right: 1px solid #c3c8cf; }
  .g1 { width: 240px; }
  .g2 { width: 144px; }
  .g3 { width: 200px; }
  .g4 { width: 236px; }
  .g5 { width: 174px; }
  .tools { display: flex; height: 70px; padding-top: 2px; }
  .glabel { height: 14px; line-height: 13px; text-align: center; color: #6b7583; font-size: 11.500px; position: relative; }
  .launch { position: absolute; right: 6px; top: 3px; }
  .stack { display: flex; flex-direction: column; }
  .w95 { width: 95px; padding-left: 7px; }
  .g2 .tools { padding-left: 3px; }
  .g2 .stack { margin-left: 4px; }
  .g3 .stack { margin-left: 3px; }
  .g3 .az { margin: 9px 5px 0 8px; gap: 12px; }
  .g4 .tools { padding-left: 3px; }
  .g4 .stack { margin-left: 4px; }
  .g5 .tools { padding-left: 7px; }
  .g5 .levels { gap: 6px; margin-left: 3px; }
  .small { height: 22px; display: flex; align-items: center; gap: 3px; color: #333b46; flex: none; }
  .big { display: flex; flex-direction: column; align-items: center; padding-top: 3px; color: #333b46; flex: none; font-size: 11.700px; }
  .big span { line-height: 13px; }
  .second { height: 13px; display: flex; align-items: center; }
  .big svg { margin-bottom: 3px; }
  .second .tri { margin-left: 3px; }
  .off { color: #9a9da2; }
  .off svg { filter: grayscale(1); opacity: .55; }
  .vsep { width: 1px; margin: 4px 5px; background: #d0d4da; }
  .s1 .w95 .small:nth-child(3) { width: 76px; margin-left: -3px; padding-left: 2px; background: linear-gradient(#fff3c2, #ffdf75); border: 1px solid #f0b92f; border-radius: 3px; }
  .s2 .glabel, .covered .tab, .covered .file span, .covered .g1 span, .covered .g2 span, .covered .g3 span, .covered .cellref span, .covered em, .s2 .cellref span, .s2 em { visibility: hidden; }

  .formula { display: flex; height: 68px; padding: 4px 0 3px; background: #dfe3e9; border-bottom: 1px solid #7f8792; }
  .namebox { width: 245px; border: 1px solid #9aa2ae; border-left: 0; background: #dee2e8; display: flex; height: 61px; }
  .cellref { width: 161px; height: 20px; background: #fff; border-bottom: 1px solid #9aa2ae; display: flex; align-items: center; justify-content: flex-end; color: #111; font-size: 12.500px; padding-right: 7px; }
  .cellref span { margin-right: 64px; }
  .fx { width: 83px; height: 20px; border: 1px solid #9aa2ae; border-width: 0 0 0 1px; border-radius: 10px 0 0 10px; display: flex; justify-content: space-between; align-items: center; padding: 0 6px 0 4px; }
  .knob { width: 8px; height: 8px; border-radius: 4px; background: #c2c7ce; }
  em { font: italic 700 14px/16px 'Liberation Serif', serif; color: #222; }
  sub { font-size: 9px; line-height: 0; }
  .fbar { flex: 1; background: #fff; border: 1px solid #9aa2ae; border-width: 1px 0; }
  .fscroll { width: 17px; background: #d5dae1; display: flex; flex-direction: column; align-items: center; gap: 14px; border: 1px solid #9aa2ae; border-width: 1px 0; }
  .up, .dn, .lt, .rt { border: 4px solid transparent; width: 0; height: 0; flex: none; }
  .up { border-bottom: 5px solid #5b6674; border-top: 0; }
  .dn { border-top: 5px solid #5b6674; border-bottom: 0; }
  .up.box { margin-top: 7px; }

  .sheetarea { display: flex; height: 478px; margin-top: 2px; }
  .sheet { flex: 1; min-width: 0; display: flex; flex-direction: column; }
  .main { display: flex; height: 461px; overflow: hidden; }
  .grid { flex: 1; min-width: 0; overflow: hidden; }
  .row { display: flex; height: 20px; }
  .heads { height: 19px; }
  .rh { width: 26px; flex: none; background: #dfe3e8; border: 1px solid #b1b7c0; border-width: 0 1px 1px 0; text-align: center; font: 14px/20px Lato, 'Open Sans', sans-serif; color: #333c48; }
  .ch { flex: none; background: #dfe3e8; border: 1px solid #9ea6b1; border-color: #b1b7c0 #b1b7c0 #9ea6b1; border-width: 0 1px 1px 0; text-align: center; font: 14px/19px Lato, 'Open Sans', sans-serif; color: #333c48; }
  .corner { background: linear-gradient(135deg, #dfe3e8 58%, #b5bcc6 58%); }
  .on.rh, .on.ch { background: #ffd65c; border-color: #c9922b; }
  .cell { flex: none; border: 1px solid #d6d8db; border-width: 0 1px 1px 0; font: 13.500px/19px Lato, 'Open Sans', sans-serif; color: #000; padding: 0 2px; letter-spacing: -.15px; }
  .num { text-align: right; letter-spacing: -.6px; }
  .last { flex: 1 1 0; width: 0; border-right: 0; padding: 0; }
  .sel.cell { outline: 2px solid #000; outline-offset: -1px; position: relative; padding: 0 1px; letter-spacing: -.3px; }
  .sel.dashed { outline-style: dashed; }
  .s6 .sel.dashed, .s6 .sel { outline-style: solid; }
  .vscroll { width: 16px; flex: none; background: #d8dce3; display: flex; flex-direction: column; align-items: center; }
  .split { width: 14px; height: 5px; border: 1px solid #7f8792; background: #fff; }
  .vscroll .up { margin: 6px 0 9px; }
  .vscroll .dn { margin-top: auto; margin-bottom: 7px; }
  .vthumb { width: 15px; background: linear-gradient(90deg, #f3f5f8, #cdd2da); border: 1px solid #8d96a3; border-radius: 2px; }
  .sheettabs { height: 17px; display: flex; align-items: stretch; background: #d8dce3; border-top: 1px solid #9aa2ae; color: #444b55; }
  .nav { margin: 3px 3px 0; }
  .st { position: relative; width: 60px; text-align: center; line-height: 15px; background: #e3e6eb; flex: none; }
  .st::after { content: ''; position: absolute; right: -1px; top: 0; width: 1px; height: 16px; background: #8d96a3; transform: skewX(-28deg); }
  .st.on { background: #fff; font-weight: 700; color: #222; width: 66px; }
  .st.new { width: 34px; display: flex; justify-content: center; }
  .hscroll { width: 404px; margin-left: auto; display: flex; align-items: center; margin-right: 16px; gap: 8px; }
  .grip { width: 7px; height: 14px; border: 1px solid #7f8792; background: #fff; flex: none; }
  .lt { border-right: 5px solid #333c48; border-left: 0; }
  .rt { border-left: 5px solid #333c48; border-right: 0; margin-left: 24px; }
  .hthumb { flex: 1; height: 14px; border: 1px solid #8d96a3; border-radius: 2px; background: linear-gradient(#f3f5f8, #cdd2da); display: grid; place-items: center; }
  .hthumb i { width: 8px; height: 7px; background: repeating-linear-gradient(90deg, #7f8792 0 1px, transparent 1px 2.300px); }
  .status { height: 21px; margin-top: 1px; display: flex; align-items: center; justify-content: space-between; background: linear-gradient(#e3e6ea, #c9cdd3 50%, #b9bec6); border-top: 1px solid #8a9099; color: #444b55; }
  .status span { padding: 4px 8px 3px; border-right: 1px solid #9aa1aa; }
  .zoomer { margin-right: 5px; }
  .pct { font: 12px 'Open Sans', sans-serif; fill: #444b55; letter-spacing: -.5px; }
  .dull { opacity: .6; }

  .pane { width: 245px; background: #cfd6df; border-right: 1px solid #8a9099; padding: 238px 8px 0 17px; font-size: 11px; color: #000; display: flex; flex-direction: column; }
  .list { position: relative; height: 140px; border: 1px solid #7f8792; border-top: 0; background: #dfe4ea; padding: 0 23px 0 7px; flex: none; }
  .entry { display: flex; gap: 11px; border-bottom: 1px solid #000; height: 71px; padding: 0 0 0 5px; }
  .entry svg { margin-top: 3px; }
  .entry:first-child { height: 64px; }
  .entry:nth-child(2) { padding-top: 8px; }
  .entry span { display: block; line-height: 15px; }
  .chev { position: absolute; right: 6px; bottom: 6px; }
  .chev path, .drop path, .tscroll path, .inp path, .field path, .pscroll path, .escroll path, .lv path, .lh path { fill: none; stroke: #444; }
  .chev path, .pscroll path { stroke-width: 1.800; }
  .which { margin: 42px 0 8px -8px; display: flex; align-items: center; gap: 5px; color: #1b72d5; font-size: 11px; }
  .help { width: 16px; height: 16px; border-radius: 8px; background: #3a7be0; color: #fff; font: 700 12px/16px 'Open Sans', sans-serif; text-align: center; }
  .closebtn { align-self: flex-end; width: 42px; height: 21px; border: 1px solid #8b8f96; background: #e4e4e4; text-align: center; line-height: 19px; margin-right: 1px; }

  .shade, .dim { position: absolute; inset: 0; }
  .shade { background: rgba(0, 0, 0, .5); }
  .dlg { position: absolute; background: #f0f0f0; border: 1px solid #6d6f73; color: #000; display: flex; flex-direction: column; box-shadow: 0 3px 12px rgba(0, 0, 0, .45); }
  .primary.primary { border: 2px solid #0078d7; }

  .import { left: 54px; top: 126px; width: 946px; height: 533px; }
  .ititle { height: 31px; background: #fff; display: flex; align-items: center; padding: 0 9px 0 8px; gap: 9px; }
  .ititle svg:last-child { margin-left: auto; }
  .inav { height: 41px; background: #fff; display: flex; align-items: center; padding: 0 12px 1px; }
  .inav > svg { margin-right: -2px; }
  .path { width: 612px; height: 30px; border: 1px solid #d9d9d9; display: flex; align-items: center; gap: 8px; padding-left: 3px; }
  .path i { color: #555; margin-top: -3px; font-size: 14px; }
  .path .drop { margin-left: auto; }
  .path b { width: 33px; height: 28px; border-left: 1px solid #d9d9d9; text-align: center; font: 15px/28px 'DejaVu Sans', sans-serif; color: #444; margin-left: 2px; }
  .search { width: 201px; height: 30px; border: 1px solid #d9d9d9; margin-left: 12px; display: flex; align-items: center; gap: 13px; padding-left: 13px; color: #666; }
  .itool { height: 31px; background: #f5f6f7; border-bottom: 1px solid #e3e5e8; display: flex; align-items: center; padding: 0 15px 0 18px; color: #1e395b; }
  .itool .nf { margin-left: 31px; }
  .itool .tri { border-top-color: #1e395b; }
  .itool svg { margin-left: auto; }
  .ibody { height: 352px; background: #fff; display: flex; }
  .tree { width: 140px; overflow: hidden; display: flex; flex-direction: column; margin-top: -4px; }
  .node { height: 24px; flex: none; display: flex; align-items: center; gap: 5px; padding-left: 24px; }
  .node.r { height: 32px; }
  .node.r:nth-child(5) { height: 29px; }
  .node.deep { padding-left: 32px; }
  .node.cur { background: #d9d9d9; }
  .tscroll { width: 15px; background: #f0f0f0; display: flex; flex-direction: column; align-items: center; justify-content: space-between; padding: 6px 0 5px; }
  .tscroll i { width: 15px; height: 195px; background: #cdcdcd; margin-top: 37px; }
  .files { flex: 1; padding: 0 7px 0 4px; }
  .fhead { display: flex; height: 33px; color: #4c607a; }
  .fhead span { height: 26px; line-height: 26px; border-right: 1px solid #e5e5e5; padding-left: 6px; letter-spacing: -.2px; }
  .fhead .n { width: 272px; padding-left: 18px; }
  .fhead .d { width: 145px; }
  .fhead .t { width: 120px; }
  .fhead .s { width: 80px; }
  .fgroup { display: flex; align-items: center; height: 31px; gap: 5px; padding-left: 3px; color: #1e3287; font-size: 14px; margin-top: -1px; }
  .fgroup::after { content: ''; flex: 1; height: 1px; background: #e2e2e2; margin-left: 2px; }
  .frow { display: flex; align-items: center; height: 22px; width: 598px; margin: 0 0 1px 15px; padding: 0 3px 0 2px; color: #6d6d6d; border: 1px solid transparent; }
  .frow .n { width: 239px; padding-left: 4px; color: #000; margin-left: 2px; }
  .frow .d { width: 145px; }
  .frow .s { margin-left: auto; }
  .frow.cur { background: #cce8ff; border-color: #99d1ff; }
  .ifoot { padding: 9px 18px 0 0; }
  .ifoot .l1, .ifoot .l2 { display: flex; justify-content: flex-end; align-items: center; }
  .inp { width: 538px; height: 23px; background: #fff; border: 1px solid #7a7a7a; margin-left: 5px; display: flex; align-items: center; justify-content: space-between; padding: 0 4px; }
  .inp.grey { width: 188px; background: #e1e1e1; border-color: #adadad; margin-left: 12px; }
  .ifoot .l2 { margin-top: 7px; }
  .l2 .tri { margin: 0 17px 0 16px; border-top-color: #000; }
  .l2 b { width: 86px; height: 23px; background: #e1e1e1; border: 1px solid #adadad; font-weight: 400; display: grid; place-items: center; letter-spacing: -.2px; }
  .l2 b + b { margin-left: 14px; }

  .wiz, .impdata { font: 10.800px/1 'Open Sans', 'Noto Sans', sans-serif; }
  .halo { position: absolute; background: rgba(255, 255, 255, .85); }
  .h1 { left: 7px; top: 24px; width: 577px; height: 413px; }
  .h2x { left: 7px; top: 26px; width: 577px; height: 412px; }
  .wiz { width: 570px; height: 408px; }
  .w1 { left: 9px; top: 29px; }
  .w2 { left: 9px; top: 29px; }
  .dtitle { height: 25px; background: #fff; display: flex; align-items: center; padding: 0 18px 0 3px; font-size: 11.500px; flex: none; }
  .dtitle b { margin-left: auto; margin-right: 37px; font-weight: 600; font-size: 12px; }
  .p1 { margin: 9px 0 0 5px; }
  .p2 { margin: 10px 0 0 5px; }
  .fs { border: 1px solid #dcdcdc; position: relative; }
  .legend { position: absolute; left: 5px; top: -6px; background: #f0f0f0; line-height: 12px; }
  .type { margin: 14px 6px 0 6px; height: 70px; padding: 15px 0 0 8px; }
  .opt { display: flex; align-items: center; height: 19px; padding-left: 17px; }
  .type p { height: 13px; }
  .radio { width: 13px; height: 13px; border: 1px solid #333; border-radius: 7px; background: #fff; margin-right: 4px; flex: none; }
  .radio.on { background: radial-gradient(#222 38%, #fff 45%); }
  .focus { outline: 1px dotted #000; }
  .desc { margin-left: 25px; }
  .opt:nth-child(4) .desc { margin-left: 13px; }
  .origin { display: flex; align-items: center; margin: 17px 0 0 5px; height: 22px; }
  .field { background: #fff; border: 1px solid #8f8f8f; height: 21px; display: flex; align-items: center; justify-content: space-between; padding-left: 4px; }
  .field b { font-weight: 400; }
  .spin { width: 77px; margin: 0 8px 0 10px; }
  .spin i { width: 15px; height: 17px; border: 1px solid #aaa; background: linear-gradient(#e5e5e5 45%, #777 45%, #777 55%, #e5e5e5 55%); margin-right: 1px; }
  .origin .sel { width: 299px; margin-left: 20px; }
  .field i { display: grid; place-items: center; }
  .sel i { width: 17px; height: 100%; background: #e1e1e1; border-left: 1px solid #aaa; }
  .origin .sel.sel { padding-left: 6px; }
  .prev { margin: 52px 0 0 13px; }
  .pwrap { display: flex; }
  .w1 .pwrap { margin: 12px 0 0 14px; }
  .pbox { width: 523px; height: 76px; border: 1px solid #000; border-bottom-color: #fff; font: 11.500px/14px 'Liberation Mono', monospace; overflow: hidden; display: flex; flex: none; }
  .pbox.lines { flex-direction: column; padding-top: 3px; }
  .ln { display: flex; height: 14px; }
  .ln b { width: 14px; border: 1px solid #000; border-width: 0 1px 1px 0; text-align: center; font-weight: 400; flex: none; margin-right: 1px; }
  .pc { border-right: 1px solid #000; padding-top: 3px; overflow: hidden; flex: none; }
  .pc:last-child { border: 0; }
  .pc span { display: block; height: 14px; line-height: 14px; }
  .pscroll { width: 16px; display: flex; flex-direction: column; align-items: center; padding: 6px 0; justify-content: space-between; }
  .pscroll i { width: 15px; height: 16px; background: #cdcdcd; margin-bottom: 26px; }
  .phs { display: flex; justify-content: space-between; align-items: center; width: 523px; height: 15px; padding: 0 5px; font-size: 16px; color: #333; }
  .phs span { margin-top: -3px; font-weight: 700; }
  .w1 .phs { margin-left: 14px; }
  .phs.faint { color: #b5b5b5; }
  .phs i { width: 468px; height: 15px; background: #cdcdcd; margin-right: 22px; margin-left: 4px; }
  .wbtns { display: flex; justify-content: flex-end; gap: 10px; margin: auto 7px 7px 0; }
  .wbtns span, .ibtns span { width: 74px; height: 22px; border: 1px solid #adadad; background: #e1e1e1; display: flex; align-items: center; justify-content: center; white-space: pre; }
  .wbtns .disabled { background: #ccc; color: #999; border-color: #bfbfbf; }

  .p3 { margin: 7px 0 0 4px; line-height: 13px; }
  .delims { display: flex; margin: 17px 0 0 6px; height: 107px; }
  .dl { width: 108px; padding: 10px 0 0 8px; }
  .ck { display: flex; align-items: center; height: 19px; gap: 4px; }
  .ck i { width: 13px; height: 13px; border: 1px solid #333; background: #fff; position: relative; flex: none; }
  .ck i.on::after { content: ''; position: absolute; left: 1.500px; top: 2px; width: 8px; height: 4px; border: solid #333; border-width: 0 0 1.500px 1.500px; transform: rotate(-45deg); }
  .other { height: 23px; }
  .other b { width: 30px; height: 20px; border: 1px solid #aaa; background: #fff; margin-left: 9px; }
  .qual { padding: 28px 0 0 10px; }
  .tq { display: flex; align-items: center; margin-top: 9px; gap: 9px; }
  .tq .field { width: 112px; height: 22px; }
  .dp { margin: 42px 6px 0 6px; height: 139px; padding: 40px 0 0 8px; flex: none; }
  .mark { position: absolute; border: 2px solid #f00a0a; }
  .m1 { left: 7px; top: 124px; width: 94px; height: 20px; }
  .m2 { left: 107px; top: 123px; width: 207px; height: 42px; }

  .impdata { left: 292px; top: 326px; width: 263px; height: 150px; box-shadow: 0 0 0 2px #ddd, 0 3px 14px rgba(0, 0, 0, .5); }
  .impdata p { margin: 8px 0 3px 5px; }
  .impdata .opt { padding-left: 24px; }
  .rng { display: flex; justify-content: space-between; align-items: center; margin: 2px 0 0 43px; width: 191px; height: 20px; background: #fff; border: 1px solid #999; padding-left: 2px; flex: none; }
  .rng b { background: #000; color: #fff; font-weight: 400; padding: 2px 0; }
  .rng i { border: 1px solid #aaa; background: #e5e5e5; padding: 1px 2px; }
  .impdata .nw { margin-top: 2px; }
  .ibtns { display: flex; gap: 10px; margin: auto 0 8px 6px; }
  .ibtns span:first-child { width: 79px; }

  .callout { position: absolute; background: #fff; border: 1px solid #606060; box-shadow: 0 4px 10px rgba(0, 0, 0, .2); color: #444; }
  .lead { font: 600 25px/36px Inter, 'Open Sans', sans-serif; font-feature-settings: 'cv11'; color: #262626; padding: 21px 0 0 32px; }
  .c1 { left: 560px; top: 409px; width: 641px; height: 325px; }
  .c2 { left: 593.500px; top: 332px; width: 610px; height: 439px; font-size: 10px; }
  .c3 { left: 608.500px; top: 442.500px; width: 574px; height: 337px; font-size: 10px; }

  .x365 { position: relative; width: 537px; height: 195px; margin: 15px 0 0 32px; background: #f3f2f1; font-size: 10.500px; overflow: hidden; display: flex; flex-direction: column; }
  .green { height: 27px; background: #217346; color: #c4dccf; display: flex; align-items: center; padding-left: 14px; flex: none; }
  .toggle { width: 35px; height: 15px; border: 1px solid #fff; border-radius: 8px; color: #fff; margin: 0 20px 0 7px; display: flex; align-items: center; gap: 4px; padding-left: 3px; font-size: 9px; }
  .toggle b { width: 8px; height: 8px; border-radius: 4px; background: #fff; }
  .green .book { margin-left: 212px; }
  .xtabs { display: grid; grid-template-columns: 47px 57px 55px 54px 91px 73px 51px 61px 60px; padding-left: 14px; height: 31px; align-items: center; flex: none; }
  .xtabs .cur { color: #217346; font-weight: 600; border-bottom: 2px solid #217346; width: 26px; padding-bottom: 3px; margin-top: 5px; }
  .xbody { display: flex; height: 90px; flex: none; }
  .xbig { display: flex; flex-direction: column; align-items: center; width: 40px; line-height: 14px; padding-top: 9px; letter-spacing: -.2px; }
  .xbig.get { margin-left: 14px; }
  .xbig.get svg { margin-bottom: 4px; }
  .xbig.ref svg { margin-bottom: 5px; }
  .xbig .top { border-top: 1px solid #d0cfce; padding: 3px 2px 0; }
  .xcol { display: flex; flex-direction: column; padding-top: 2.500px; }
  .xcol span { display: flex; align-items: center; gap: 6px; height: 29px; }
  .xcol.a { margin-left: 18px; width: 135px; }
  .xcol.b { width: 146px; }
  .xsep { width: 1px; height: 102px; background: #d0cfce; }
  .xbig.ref { margin-left: 17px; }
  .xcol.c { margin-left: 20px; }
  .faint { color: #aaa; }
  .faint svg { opacity: .5; }
  .xlabels { display: flex; height: 16px; padding-left: 126px; gap: 191px; align-items: center; border-bottom: 1px solid #ccc; flex: none; }
  .xbar { flex: 1; background: #e6e6e6; padding: 9px 0 0 3px; display: flex; }
  .xbar span { background: #fff; border: 1px solid #ccc; border-bottom: 0; height: 24px; display: flex; align-items: center; }
  .xbar .ref { width: 93px; padding: 0 6px; justify-content: space-between; }
  .dots { width: 27px; text-align: center; color: #999; line-height: 20px; }
  .xbar .fxs { width: 98px; justify-content: space-around; color: #aaa; }
  .xbar .rest { flex: 1; margin-left: 4px; }
  .xbar em { font-size: 12px; }
  .ink, .ink2 { position: absolute; left: 0; top: 0; }
  .ink2 { left: -1px; top: -1px; }

  .csv { display: flex; justify-content: space-between; align-items: flex-end; height: 24px; padding: 0 26px 0 31px; color: #4f9a70; font-size: 14px; line-height: 16px; }
  .csv b { font: 600 12.500px/16px Inter, sans-serif; font-feature-settings: 'cv11'; color: #d93030; position: relative; top: -12px; }
  .opts { display: flex; gap: 8px; padding-left: 30px; margin-top: 12px; font-size: 10.500px; }
  .opts > div { width: 184px; }
  .opts > .open { width: 166px; }
  .lab { height: 12px; line-height: 10px; }
  .dd { display: flex; justify-content: space-between; align-items: center; height: 20px; border: 1px solid #ababab; padding: 0 6px 0 4px; }
  .open .dd { border-right: 0; }
  .lists { display: flex; padding-left: 30px; height: 251px; overflow: hidden; }
  .enc { width: 254px; border-left: 1px solid #ababab; display: flex; flex-direction: column; font-size: 10.500px; }
  .enc div { height: 16.700px; line-height: 16px; padding-left: 5px; flex: none; }
  .enc .cur { background: #9fd5b5; }
  .escroll { width: 15px; background: #efefef; border-right: 1px solid #aaa; padding: 15px 0 0 2px; }
  .escroll path { stroke-width: 2; }
  .tw { width: 281px; padding-top: 7px; }
  .th, .tr { display: grid; grid-template-columns: 128px 153px; height: 17.500px; line-height: 17px; border-bottom: 1px solid #d5d5d5; }
  .th { background: #f3f3f3; border-top: 1px solid #bbb; }
  .th .mid { padding-left: 87px; }
  .tr div + div { border-left: 1px solid #d5d5d5; padding-left: 4px; }
  .tip { position: absolute; left: 201px; top: 370px; width: 114px; height: 17px; border: 1px solid #888; background: #fff; padding-left: 4px; line-height: 14px; box-shadow: 2px 2px 2px rgba(0, 0, 0, .3); }

  .ltable { display: flex; margin: 15px 0 0 31px; height: 101px; }
  .lrows { width: 403px; padding-top: 2px; font-size: 10.500px; }
  .lr { display: grid; grid-template-columns: 80px 254px 69px; height: 21px; line-height: 20px; border-top: 1px solid #ccc; }
  .lr:last-child { border-bottom: 1px solid #ccc; height: 22px; }
  .lr div + div { border-left: 1px solid #ccc; padding-left: 4px; }
  .lv { width: 18px; background: #efefef; border-right: 1px solid #aaa; display: flex; flex-direction: column; align-items: center; }
  .lv i { width: 15px; height: 35px; background: #cdcdcd; margin-bottom: 40px; }
  .lh { margin-left: 31px; width: 421px; height: 18px; background: #efefef; border: 1px solid #aaa; border-width: 0 1px 1px 0; padding: 3px 0 0 377px; }
  .lbtns { display: flex; margin: 20px 0 0 207px; height: 22px; font-size: 10.500px; }
  .lbtns > div { border: 1px solid #ababab; display: grid; place-items: center; }
  .lbtns > .load { width: 67px; border-color: #217346; color: #217346; grid-template-columns: 49px 16px; place-items: stretch; text-align: center; line-height: 19px; }
  .load b { border-left: 1px solid #217346; display: grid; place-items: center; }
  .load .tri { margin: 0; }
  .tf { width: 92px; margin: 0 13px; }
  .cn { width: 60px; }
  .under { display: block; margin: 4px 0 22px 206px; width: 67px; height: 6px; border-radius: 3px; background: #e8191c; }
  .ticks { margin-left: 31px; width: 450px; height: 5px; border-top: 2px solid #217346; border-bottom: 1px solid #ccc; display: flex; }
  .ticks i { border-right: 1px solid #aaa; }
</style>
